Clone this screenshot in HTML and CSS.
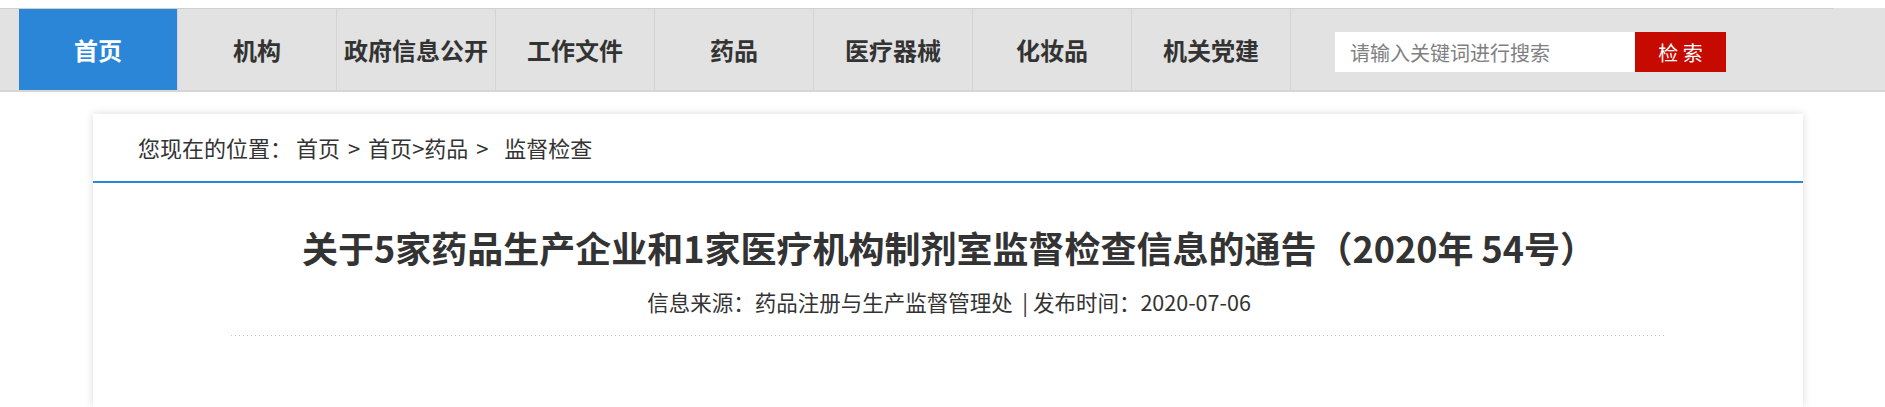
FILE: index.html
```html
<!DOCTYPE html>
<html lang="zh-CN">

<head>
  <meta charset="UTF-8">
  <meta name="viewport" content="width=device-width, initial-scale=1.0">
  <title>关于5家药品生产企业和1家医疗机构制剂室监督检查信息的通告</title>
  <link rel="stylesheet" href="styles.css">
</head>

<body>
  <div class="header">
    <ul class="nav">
      <li class="active"><a href="#">首页</a></li>
      <li><a href="#">机构</a></li>
      <li><a href="#">政府信息公开</a></li>
      <li><a href="#">工作文件</a></li>
      <li><a href="#">药品</a></li>
      <li><a href="#">医疗器械</a></li>
      <li><a href="#">化妆品</a></li>
      <li><a href="#">机关党建</a></li>
    </ul>
    <form class="search" onsubmit="return false;">
      <input type="text" class="search-input" placeholder="请输入关键词进行搜索">
      <button type="submit" class="search-btn">检 索</button>
    </form>
  </div>

  <div class="main">
    <div class="crumb">
      <span class="crumb-label">您现在的位置：</span><a href="#">首页</a> &gt; <a href="#">首页</a>&gt;<a href="#">药品</a> &gt;&nbsp; <a href="#">监督检查</a>
    </div>

    <div class="article">
      <h1 class="title">关于5家药品生产企业和1家医疗机构制剂室监督检查信息的通告（2020年 54号）</h1>
      <p class="meta">信息来源：药品注册与生产监督管理处&nbsp; | 发布时间：2020-07-06</p>
      <div class="divider"></div>
    </div>
  </div>
</body>

</html>
```

FILE: styles.css
```css
body {
  margin: 0;
  font-family: "Noto Sans CJK SC", "Noto Sans", sans-serif;
  color: #333;
  background: #fff;
}

a {
  color: inherit;
  text-decoration: none;
}

/* top navigation */
.header {
  display: flex;
  margin-top: 8px;
  padding-left: 19px;
  height: 81px;
  background: linear-gradient(#d0d0d0, #d0d0d0) top left / 1833px 1px no-repeat, #e2e2e2;
  border-top: 1px solid transparent;
  border-bottom: 2px solid #d6d6d6;
  background-origin: border-box;
}

.nav {
  display: flex;
  margin: 0;
  padding: 0;
  list-style: none;
}

.nav li {
  width: 158px;
  border-right: 1px solid #d4d4d4;
  text-align: center;
  font-size: 24px;
  font-weight: bold;
  line-height: 81px;
}

.nav li.active {
  background: #2b86d7;
  color: #fff;
}

.search {
  display: flex;
  align-self: flex-start;
  margin: 23px 0 0 44px;
}

.search-input {
  width: 300px;
  height: 40px;
  box-sizing: border-box;
  padding: 0 15px;
  border: none;
  outline: none;
  background: #fff;
  font-family: inherit;
  font-size: 20px;
  color: #333;
}

.search-input::placeholder {
  color: #808080;
}

.search-btn {
  width: 91px;
  height: 40px;
  border: none;
  background: #c70a00;
  color: #fff;
  font-family: inherit;
  font-size: 20px;
  cursor: pointer;
}

/* content card */
.main {
  width: 1710px;
  min-height: 293px;
  margin: 22px 0 0 93px;
  background: #fff;
  box-shadow: 0 0 8px rgba(0, 0, 0, 0.15);
}

.crumb {
  height: 67px;
  padding-left: 45px;
  line-height: 67px;
  font-size: 22px;
  word-spacing: 3px;
  border-bottom: 2px solid #2b86d7;
}

.crumb-label {
  margin-right: 4px;
}

.article {
  margin: 0 136px 0 138px;
  text-align: center;
}

.title {
  margin: 40px 0 0;
  font-size: 36px;
  line-height: 48px;
  font-weight: bold;
}

.meta {
  margin: 16px 0 0;
  font-size: 21.5px;
  line-height: 30px;
}

.divider {
  height: 1px;
  margin-top: 18px;
  background: linear-gradient(to right, #c4c4c4 1px, transparent 1px) 0 0 / 4px 1px repeat-x;
}
```
